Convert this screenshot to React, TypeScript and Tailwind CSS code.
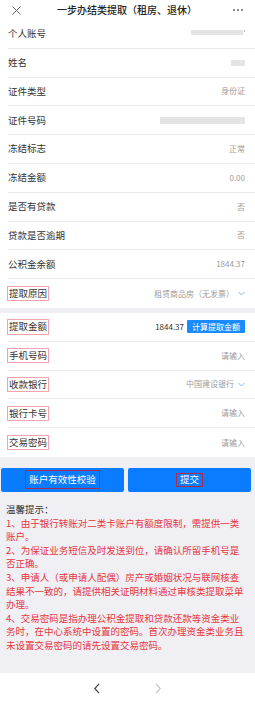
import React from 'react';

const font = { fontFamily: '"Noto Sans CJK SC", "Noto Sans", sans-serif' };

const Chevron: React.FC = () => (
  <svg className="w-[7px] h-[5px] ml-[4px]" viewBox="0 0 7 5" fill="none" stroke="#86b6ec" strokeWidth="1">
    <path d="M0.5 1l3 3 3-3" />
  </svg>
);

type RowProps = {
  label: string;
  boxed?: boolean;
  last?: boolean;
  children?: React.ReactNode;
};

const Row: React.FC<RowProps> = ({ label, boxed, last, children }) => (
  <div className="h-[28.8px] pl-[8px] bg-white">
    <div className={`h-full flex items-center justify-between pr-[10px] ${last ? '' : 'border-b border-[#ebebeb]'}`}>
      <span
        className={`text-[9.5px] leading-none text-[#333] ${
          boxed ? 'border border-[#f2a3ab] px-[1px] py-[2px] -ml-[1px]' : ''
        }`}
      >
        {label}
      </span>
      <div className="flex items-center text-[8px] text-[#9b9b9b] leading-none">{children}</div>
    </div>
  </div>
);

const Blur: React.FC<{ w: string; h: string }> = ({ w, h }) => (
  <div className={`${w} ${h} bg-[#e4e4e4]`}></div>
);

const tips = [
  '1、由于银行转账对二类卡账户有额度限制，需提供一类账户。',
  '2、为保证业务短信及时发送到位，请确认所留手机号是否正确。',
  '3、申请人（或申请人配偶）房产或婚姻状况与联网核查结果不一致的，请提供相关证明材料通过审核类提取菜单办理。',
  '4、交易密码是指办理公积金提取和贷款还款等资金类业务时，在中心系统中设置的密码。首次办理资金类业务且未设置交易密码的请先设置交易密码。',
];

export default function App() {
  return (
    <div className="w-[255px] h-[713px] bg-[#f0eff4] flex flex-col overflow-hidden" style={font}>
      {/* Header */}
      <div className="h-[20px] bg-white flex items-center justify-between px-[12px]">
        <svg className="w-[9px] h-[9px]" viewBox="0 0 9 9" stroke="#555" strokeWidth="0.9">
          <path d="M0.5 0.5l8 8M8.5 0.5l-8 8" />
        </svg>
        <span className="text-[10px] font-medium text-[#222] leading-none">一步办结类提取（租房、退休）</span>
        <div className="flex gap-[2px]">
          <span className="w-[2px] h-[2px] rounded-full bg-[#666]"></span>
          <span className="w-[2px] h-[2px] rounded-full bg-[#666]"></span>
          <span className="w-[2px] h-[2px] rounded-full bg-[#666]"></span>
        </div>
      </div>

      {/* Account info */}
      <Row label="个人账号">
        <div className="flex items-start -mt-[2px]">
          <Blur w="w-[52px]" h="h-[5px]" />
          <span className="w-[1px] h-[2px] bg-[#bbb] ml-[1px]"></span>
        </div>
      </Row>
      <Row label="姓名">
        <Blur w="w-[14px]" h="h-[6px]" />
      </Row>
      <Row label="证件类型">身份证</Row>
      <Row label="证件号码">
        <Blur w="w-[85px]" h="h-[7px]" />
      </Row>
      <Row label="冻结标志">正常</Row>
      <Row label="冻结金额">0.00</Row>
      <Row label="是否有贷款">否</Row>
      <Row label="贷款是否逾期">否</Row>
      <Row label="公积金余额">1844.37</Row>
      <Row label="提取原因" boxed last>
        租赁商品房（无发票）
        <Chevron />
      </Row>

      <div className="h-[5px]"></div>

      <Row label="提取金额" boxed>
        <span className="text-[#333]">1844.37</span>
        <span className="ml-[3px] h-[13px] px-[5px] flex items-center bg-[#1a8bff] text-white rounded-[1px]">计算提取金额</span>
      </Row>
      <Row label="手机号码" boxed>请输入</Row>
      <Row label="收款银行" boxed>
        中国建设银行
        <Chevron />
      </Row>
      <Row label="银行卡号" boxed>请输入</Row>
      <Row label="交易密码" boxed last>请输入</Row>

      {/* Buttons */}
      <div className="flex gap-[4px] px-[1px] mt-[11px] pr-[4px]">
        <button className="flex-1 h-[24px] bg-[#0a7cff] rounded-[2px] flex items-center justify-center">
          <span className="border border-[#b02a4a] px-[3px] h-[19px] flex items-center text-[9.5px] text-white leading-none">账户有效性校验</span>
        </button>
        <button className="flex-1 h-[24px] bg-[#0a7cff] rounded-[2px] flex items-center justify-center">
          <span className="border border-[#b02a4a] px-[3px] h-[14px] flex items-center text-[9.5px] text-white leading-none">提交</span>
        </button>
      </div>

      {/* Tips */}
      <div className="pl-[6px] w-[246px] mt-[11px]">
        <div className="text-[9.5px] leading-[13.6px] text-[#333]">温馨提示：</div>
        {tips.map((t) => (
          <p key={t} className="text-[9.5px] leading-[13.6px] text-[#e8363f]">{t}</p>
        ))}
      </div>

      <div className="flex-1"></div>

      {/* Bottom nav */}
      <div className="h-[40px] bg-white flex items-start justify-center gap-[53px] pt-[10px]">
        <svg className="w-[8px] h-[11px]" viewBox="0 0 8 11" fill="none" stroke="#444" strokeWidth="1.2">
          <path d="M6 0.8L1.8 5.5 6 10.2" />
        </svg>
        <svg className="w-[8px] h-[11px]" viewBox="0 0 8 11" fill="none" stroke="#c4c4c4" strokeWidth="1.2">
          <path d="M2 0.8l4.2 4.7L2 10.2" />
        </svg>
      </div>
    </div>
  );
}
